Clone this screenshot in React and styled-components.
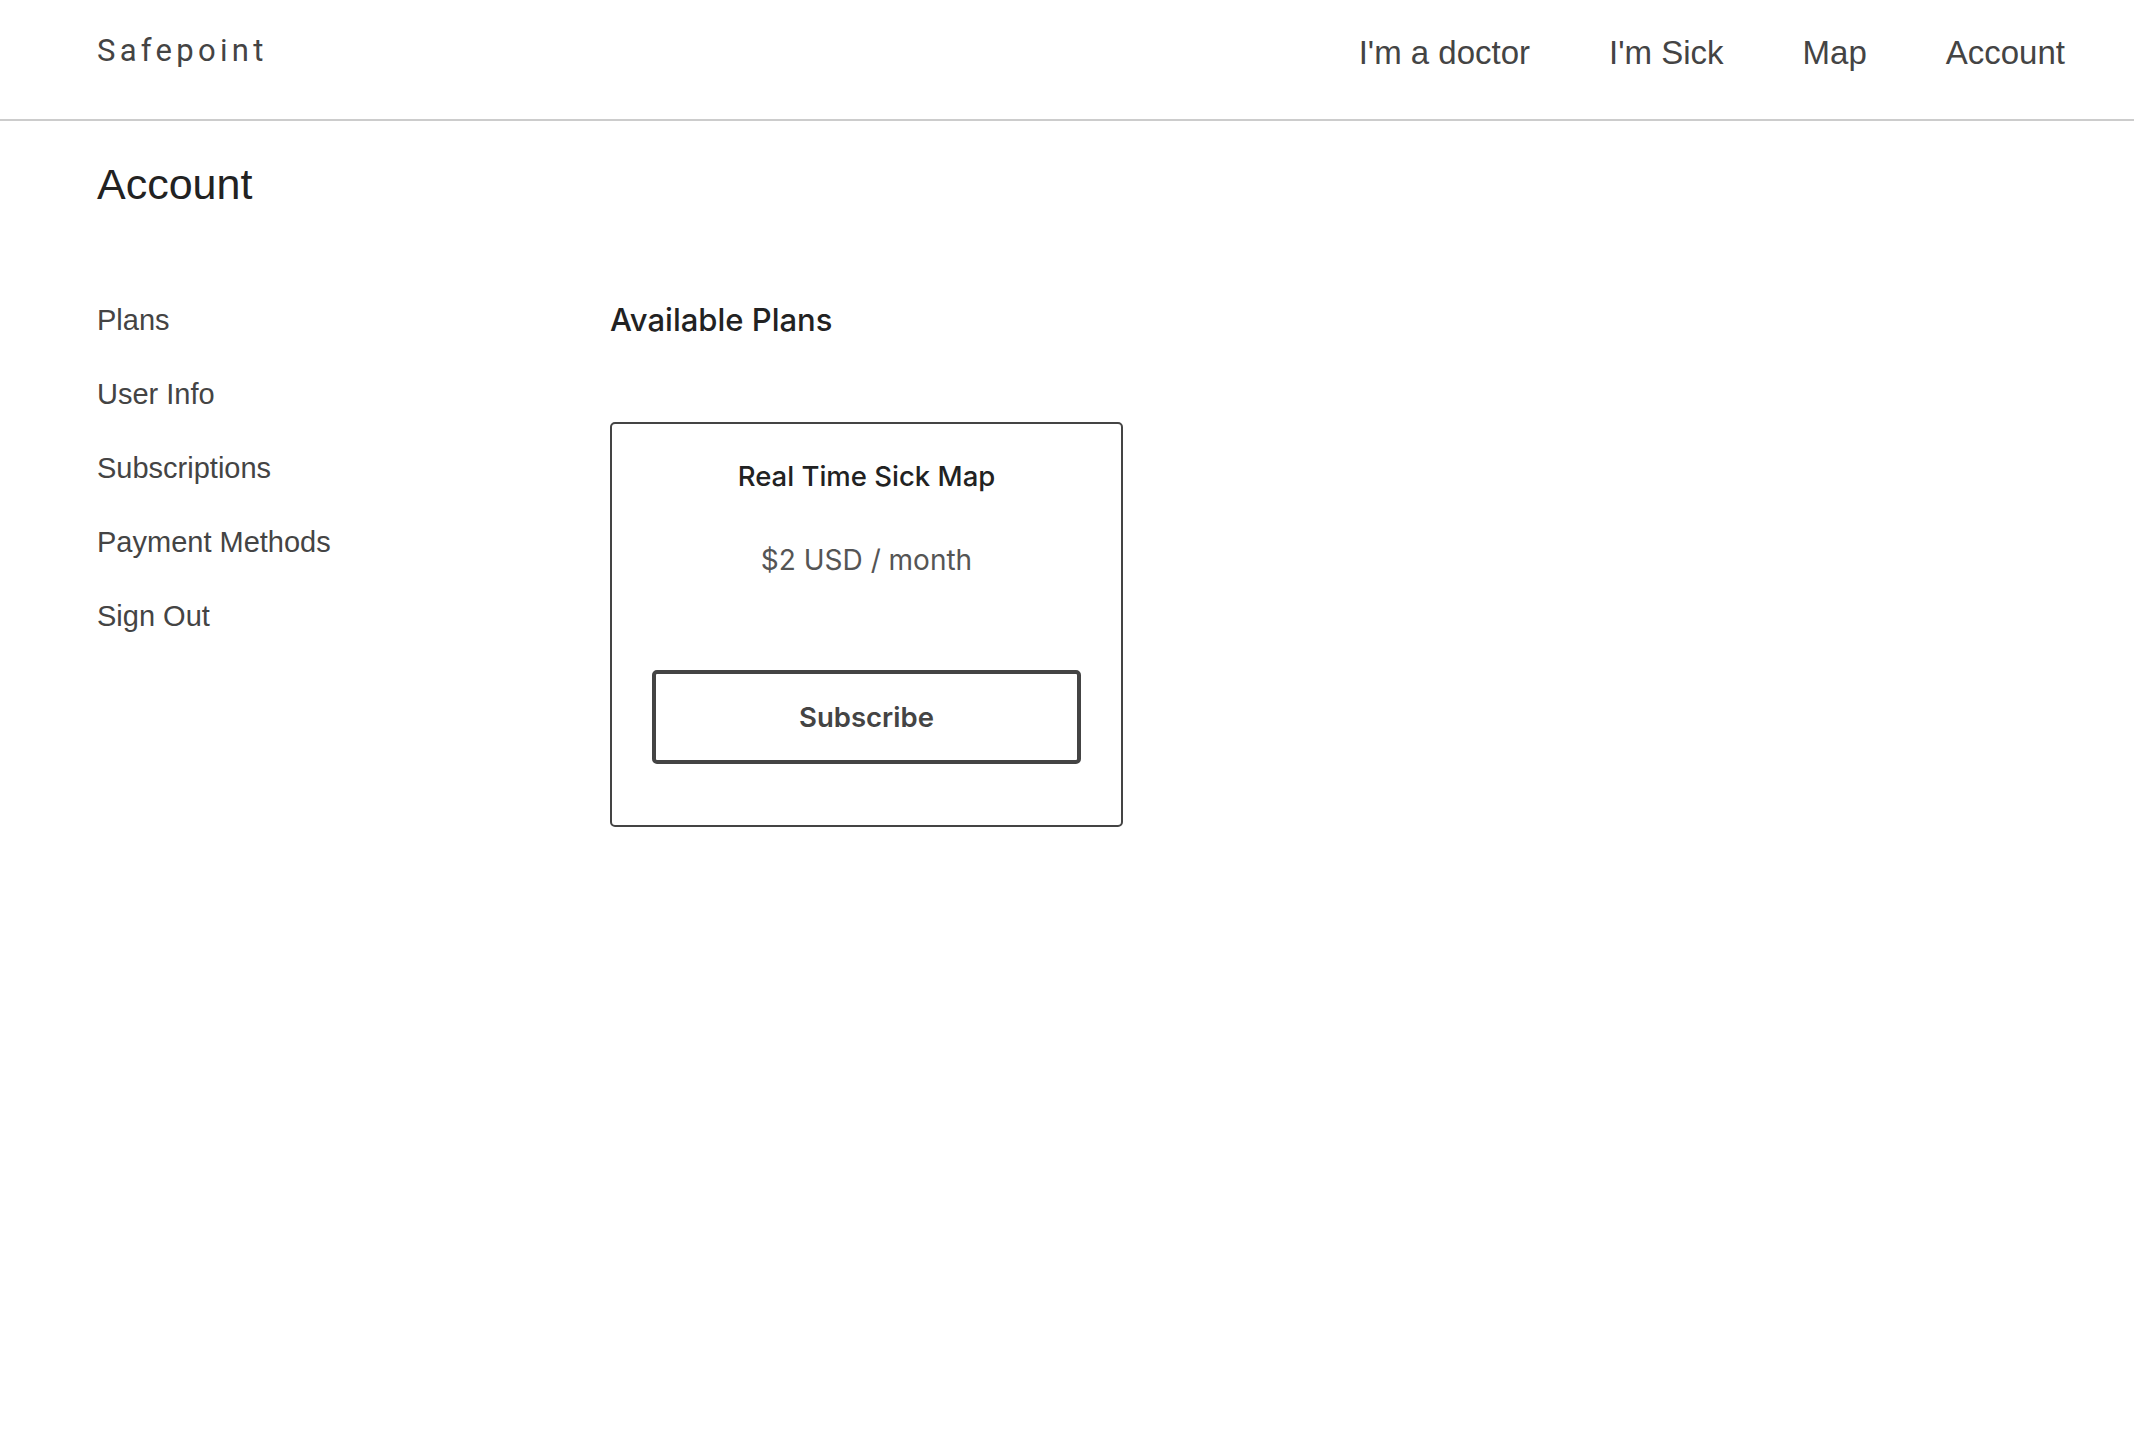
import React from "react";
import styled, { createGlobalStyle } from "styled-components";

const GlobalStyle = createGlobalStyle`
  body {
    margin: 0;
    background: #ffffff;
    font-family: "Liberation Sans", Arial, sans-serif;
  }
`;

const Header = styled.header`
  height: 119px;
  display: flex;
  justify-content: space-between;
  align-items: flex-start;
  padding: 0 69px 0 97px;
  border-bottom: 2px solid #cccccc;
`;

const Logo = styled.div`
  margin-top: 34px;
  font-family: Roboto, "Liberation Sans", sans-serif;
  font-size: 31px;
  line-height: 34px;
  letter-spacing: 4.3px;
  color: #444;
`;

const Nav = styled.nav`
  display: flex;
  gap: 79px;
  margin-top: 34px;
`;

const NavLink = styled.a`
  font-size: 33px;
  line-height: 38px;
  color: #444;
  text-decoration: none;
  cursor: pointer;
`;

const Main = styled.main`
  padding: 0 97px;
`;

const PageTitle = styled.h1`
  margin: 38px 0 0;
  font-size: 43px;
  line-height: 50px;
  font-weight: 400;
  color: #222;
`;

const Content = styled.div`
  display: flex;
  margin-top: 74px;
`;

const Sidebar = styled.ul`
  list-style: none;
  margin: 0;
  padding: 0;
  width: 513px;
  flex-shrink: 0;
`;

const SideItem = styled.li`
  font-size: 29px;
  line-height: 74px;
  color: #444;
  cursor: pointer;
`;

const Section = styled.section`
  flex: 1;
`;

const SectionTitle = styled.h2`
  margin: 0;
  font-family: Inter, "Liberation Sans", sans-serif;
  font-size: 31px;
  line-height: 74px;
  font-weight: 500;
  color: #222;
`;

const PlanCard = styled.div`
  width: 513px;
  box-sizing: border-box;
  margin-top: 65px;
  padding: 35px 40px 61px;
  border: 2px solid #444;
  border-radius: 5px;
  text-align: center;
  font-family: Inter, "Liberation Sans", sans-serif;
`;

const PlanName = styled.div`
  font-size: 27.5px;
  line-height: 34px;
  font-weight: 500;
  color: #222;
`;

const PlanPrice = styled.div`
  margin-top: 50px;
  font-size: 28px;
  line-height: 34px;
  color: #555;
`;

const SubscribeButton = styled.button`
  display: block;
  width: 100%;
  height: 94px;
  margin-top: 93px;
  background: #fff;
  border: 4px solid #444;
  border-radius: 5px;
  font-family: Inter, "Liberation Sans", sans-serif;
  font-size: 27.5px;
  font-weight: 600;
  color: #444;
  cursor: pointer;
`;

export default function App() {
  const navItems = ["I'm a doctor", "I'm Sick", "Map", "Account"];
  const sideItems = ["Plans", "User Info", "Subscriptions", "Payment Methods", "Sign Out"];

  return (
    <>
      <GlobalStyle />
      <Header>
        <Logo>Safepoint</Logo>
        <Nav>
          {navItems.map((item) => (
            <NavLink key={item}>{item}</NavLink>
          ))}
        </Nav>
      </Header>

      <Main>
        <PageTitle>Account</PageTitle>
        <Content>
          <Sidebar>
            {sideItems.map((item) => (
              <SideItem key={item}>{item}</SideItem>
            ))}
          </Sidebar>
          <Section>
            <SectionTitle>Available Plans</SectionTitle>
            <PlanCard>
              <PlanName>Real Time Sick Map</PlanName>
              <PlanPrice>$2 USD / month</PlanPrice>
              <SubscribeButton>Subscribe</SubscribeButton>
            </PlanCard>
          </Section>
        </Content>
      </Main>
    </>
  );
}
